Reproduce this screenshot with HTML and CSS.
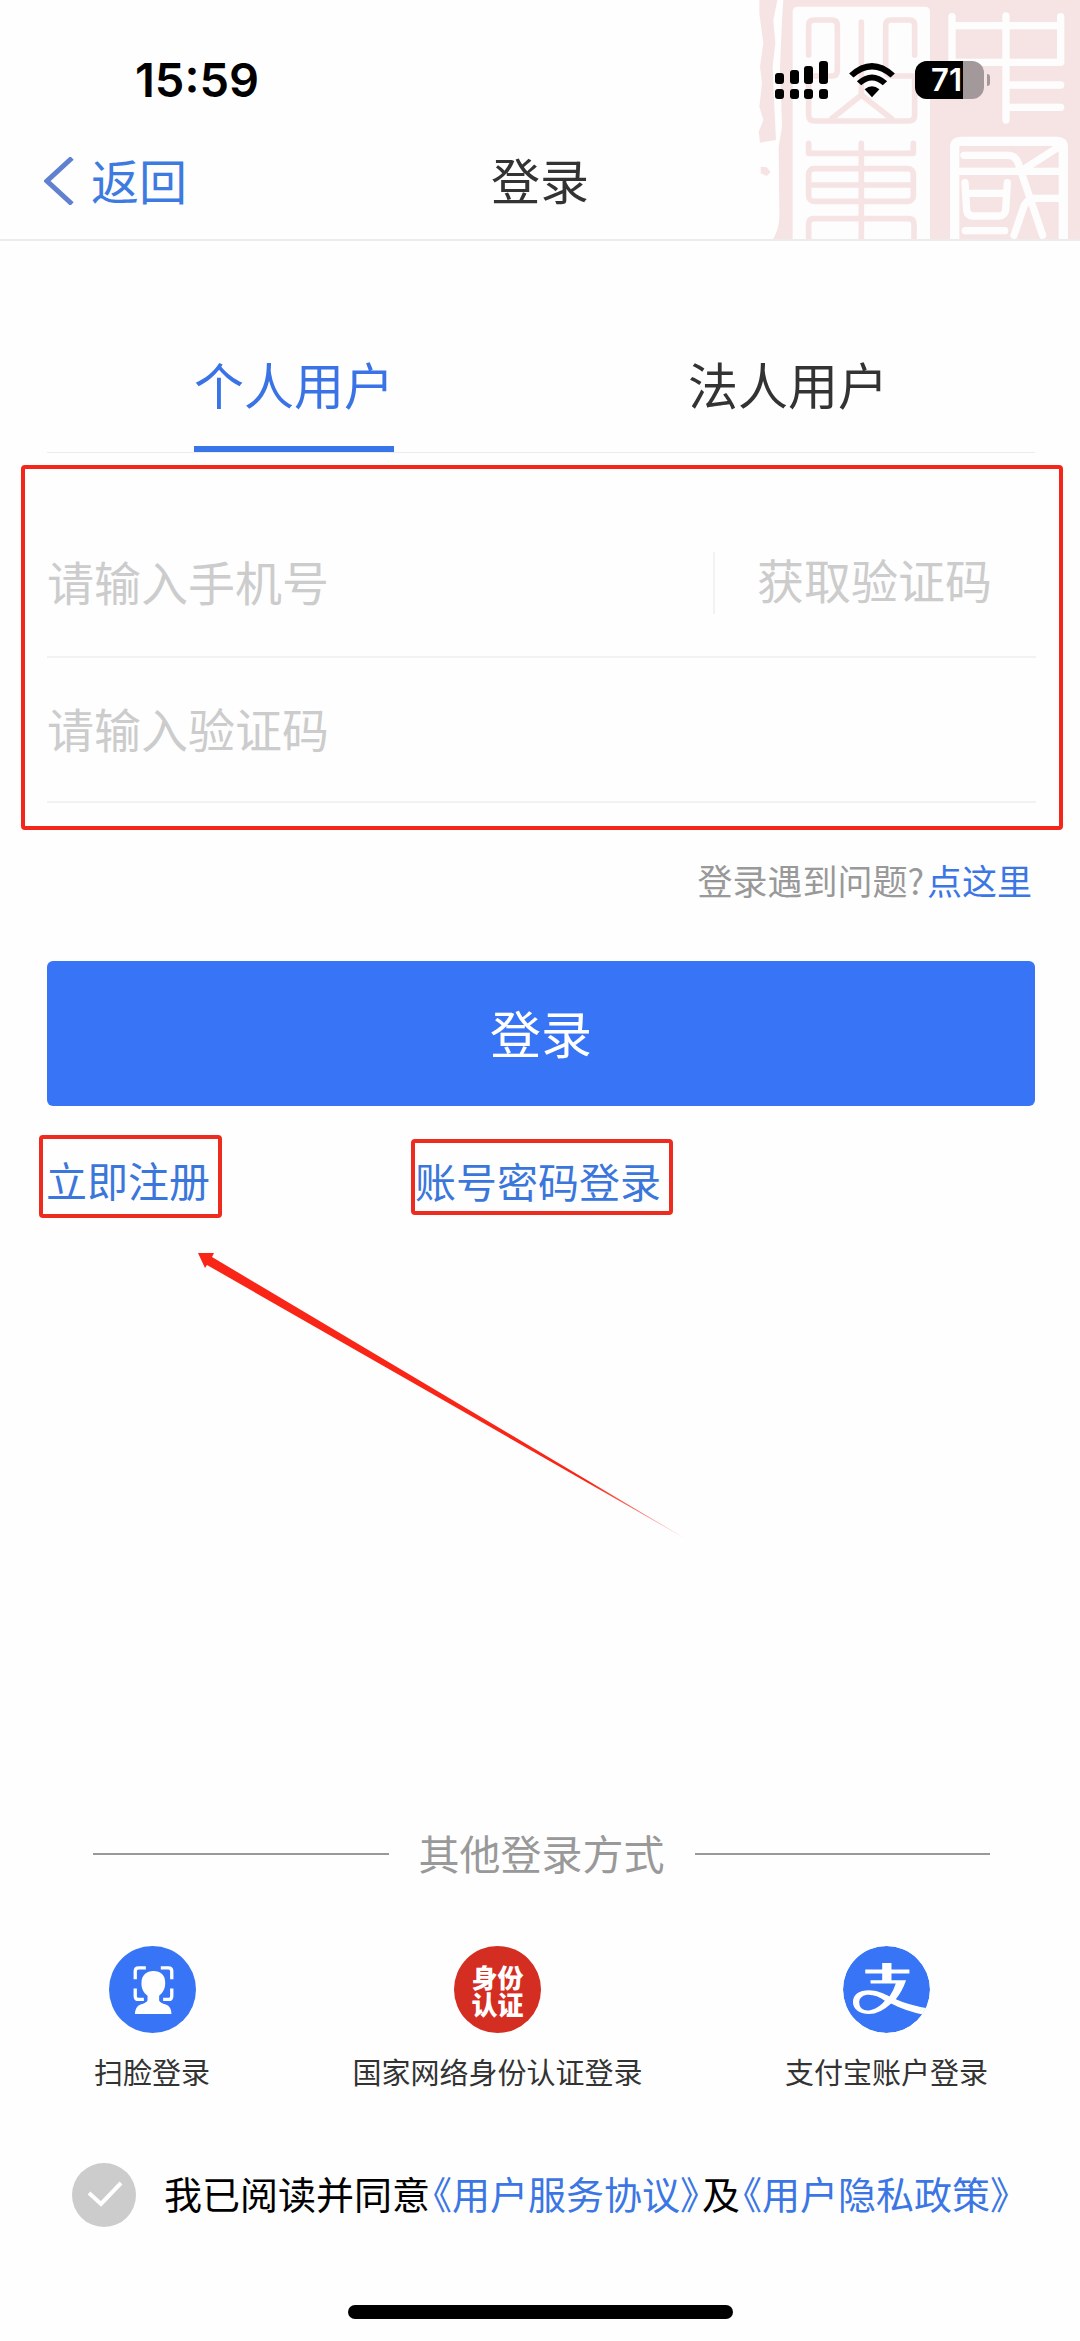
FILE: index.html
```html
<!DOCTYPE html>
<html lang="zh-CN">
<head>
<meta charset="utf-8">
<meta name="viewport" content="width=device-width, initial-scale=1">
<title>登录</title>
<link rel="stylesheet" href="styles.css">
</head>
<body>
<div class="screen">
  <header class="header">
    <svg class="seal" viewBox="0 0 1080 717" aria-hidden="true">
      <path fill="#f6e4e5" d="M190 0H1080V717H160Q180 680 178 640L176 440L186 380L180 200L186 60Z"/>
      <path fill="#f6e4e5" d="M118 0H172L160 60L166 130L158 200L162 300L168 420L120 428L116 395L130 360L118 320L126 250L120 200L130 130L118 40ZM122 500L140 502L152 516L140 528L122 520Z"/>
      <path fill="#fefdfd" d="M218 36Q218 20 234 20H616Q630 20 630 36V717H218Z"/>
      <g fill="none" stroke="#f6e4e5" stroke-width="17" stroke-linecap="round" stroke-linejoin="round">
        <path d="M266 165V76Q266 60 282 60H336Q352 60 352 76V210Q352 228 336 228H266V345Q266 363 284 363H566Q584 363 584 345V228H515Q497 228 497 210V76Q497 60 513 60H568Q584 60 584 76V165"/>
        <path d="M424 66V285M424 285L335 356M424 285L515 356"/>
        <path d="M266 430V460H580V430M424 430V717M266 555H580"/>
        <rect x="266" y="506" width="314" height="98" rx="16"/>
        <path d="M266 717V672Q266 656 282 656H566Q582 656 582 672V717"/>
      </g>
      <g fill="none" stroke="#fefdfd" stroke-width="22" stroke-linecap="round" stroke-linejoin="round">
        <path d="M696 50V187H1022V50M696 77H1022M858 48V360M858 255H1022M858 322H1022"/>
        <path stroke-width="28" d="M704 717V440Q704 424 722 424H1012Q1030 424 1030 440V717"/>
        <path d="M732 466H865Q890 466 898 500L968 706M716 514H1020M1008 446L905 512M1018 595H940Q915 600 908 630L882 706M735 548L740 630Q742 648 760 648H836Q854 648 857 630L862 548M745 580H855M736 692H854"/>
      </g>
    </svg>
    <div class="status">
      <span class="time">15:59</span>
      <svg class="signal" viewBox="0 0 54 38" aria-hidden="true">
        <rect x="0" y="12" width="9" height="11" rx="3"/><rect x="15" y="9" width="9" height="14" rx="3"/><rect x="29" y="5" width="9" height="18" rx="3"/><rect x="44" y="0" width="9" height="23" rx="3"/>
        <rect x="0" y="28" width="9" height="10" rx="3"/><rect x="15" y="28" width="9" height="10" rx="3"/><rect x="29" y="28" width="9" height="10" rx="3"/><rect x="44" y="28" width="9" height="10" rx="3"/>
      </svg>
      <svg class="wifi" viewBox="0 0 136 104" aria-hidden="true">
        <path d="M0 31Q68 -31 136 31L123 43Q68 -5 13 43Z"/>
        <path d="M23 54Q68 14 113 54L100 66Q68 38 36 66Z"/>
        <path d="M46 78Q68 60 90 78L68 102Z"/>
      </svg>
      <span class="battery"><span class="battery-level">71</span></span>
      <span class="battery-tip"></span>
    </div>
    <nav class="nav">
      <a class="back" href="#">
        <svg class="chevron" viewBox="0 0 30 48" aria-hidden="true"><path d="M28 1L3 24L28 47"/></svg>返回</a>
      <h1 class="title">登录</h1>
    </nav>
  </header>

  <main class="main">
    <div class="tabs" role="tablist">
      <button class="tab tab-active" type="button" role="tab" aria-selected="true">个人用户</button>
      <button class="tab" type="button" role="tab" aria-selected="false">法人用户</button>
    </div>

    <form class="login">
      <div class="fields">
        <div class="field field-phone">
          <input class="input" type="tel" aria-label="手机号" placeholder="请输入手机号">
          <button class="send" type="button">获取验证码</button>
        </div>
        <div class="field">
          <input class="input" type="text" aria-label="验证码" placeholder="请输入验证码">
        </div>
      </div>
      <p class="help">登录遇到问题?<a class="link help-link" href="#">点这里</a></p>
      <button class="submit" type="button">登录</button>
      <div class="options">
        <a class="option option-register" href="#">立即注册</a>
        <a class="option option-password" href="#">账号密码登录</a>
        <svg class="arrow" viewBox="0 0 488 286" aria-hidden="true">
          <defs><linearGradient id="fade" x1="0" x2="1"><stop offset=".8" stop-color="#f92618"/><stop offset="1" stop-color="#f92618" stop-opacity=".3"/></linearGradient></defs>
          <path fill="url(#fade)" d="M0 0L16 0L14 4L488 286L9 12L7 15Z"/>
        </svg>
      </div>
    </form>
  </main>

  <footer class="footer">
    <h2 class="others">其他登录方式</h2>
    <div class="methods">
      <a class="method" href="#">
        <svg class="badge" viewBox="89 47 262 262" aria-hidden="true">
          <circle cx="220" cy="178" r="131" fill="#3875f6"/>
          <path fill="none" stroke="#fff" stroke-width="10" d="M168 147V123Q168 113 178 113H200M245 113H268Q278 113 278 123V147M168 175V198Q168 208 178 208H194M278 175V198Q278 208 268 208H252"/>
          <path fill="#fff" stroke="#3875f6" stroke-width="8" paint-order="stroke" d="M223 122C244 122 259 136 258 155C260 174 251 188 240 197V211Q243 219 260 223Q277 229 277 252H167Q168 229 184 223Q201 219 205 211V197C193 188 185 174 187 155C187 136 202 122 223 122Z"/>
        </svg>
        扫脸登录</a>
      <a class="method" href="#">
        <span class="badge badge-id"><span>身份</span><span>认证</span></span>
        国家网络身份认证登录</a>
      <a class="method" href="#">
        <svg class="badge" viewBox="250 47 262 262" aria-hidden="true">
          <clipPath id="disc"><circle cx="381" cy="178" r="131"/></clipPath>
          <g clip-path="url(#disc)">
            <circle cx="381" cy="178" r="131" fill="#3875f6"/>
            <path fill="#fff" d="M317 118H368V98H396V118H450V130H396V150H440Q428 184 409 207Q445 224 512 236L502 256Q440 244 395 220Q361 252 328 252C298 252 280 236 280 216C280 193 299 180 328 180C350 180 372 189 390 199Q403 180 409 160H333V150H368V130H317ZM376 212C359 199 338 192 322 194C306 197 298 206 299 219C300 235 311 242 328 241C346 239 362 228 376 212Z"/>
          </g>
        </svg>
        支付宝账户登录</a>
    </div>
    <div class="agree">
      <span class="tick">
        <input class="tick-box" type="checkbox" id="agree">
        <svg class="tick-mark" viewBox="0 0 64 64" aria-hidden="true"><path d="M17 30L29 41L49 20"/></svg>
      </span>
      <p class="terms"><label for="agree">我已阅读并同意</label><a class="link term" href="#">《用户服务协议》</a>及<a class="link term" href="#">《用户隐私政策》</a></p>
    </div>
    <div class="home"></div>
  </footer>
</div>
</body>
</html>
```
FILE: styles.css
```css
* {
  box-sizing: border-box;
}

body {
  margin: 0;
  background: #fefefe;
  color: #333;
  font-family: "Noto Sans CJK SC", sans-serif;
}

h1,
h2,
p {
  margin: 0;
  font-weight: 400;
}

a {
  color: inherit;
  text-decoration: none;
}

button,
input {
  padding: 0;
  border: 0;
  background: none;
  color: inherit;
  font: inherit;
}

.screen {
  display: flex;
  flex-direction: column;
  min-height: 100vh;
}

/* Status bar and navigation */
.header {
  position: relative;
  border-bottom: 2px solid #ececec;
}

.seal {
  position: absolute;
  top: 0;
  right: 0;
  height: 100%;
}

.status {
  position: relative;
  display: flex;
  align-items: center;
  padding: 51px 90px 13px 135px;
}

.time {
  margin-right: auto;
  color: #000;
  font: 600 47px/58px Inter, sans-serif;
}

.signal {
  width: 54px;
  height: 38px;
}

.wifi {
  width: 46px;
  height: 35px;
  margin: 0 20px;
}

.battery {
  width: 69px;
  height: 38px;
  overflow: hidden;
  border-radius: 12px;
  background: #a3999b;
}

.battery-level {
  display: block;
  width: 48px;
  padding-right: 1px;
  background: #000;
  color: #fff;
  font: 600 31px/38px Inter, sans-serif;
  text-align: right;
}

.battery-tip {
  width: 3px;
  height: 12px;
  margin-left: 3px;
  border-radius: 0 4px 4px 0;
  background: #a3999b;
}

.nav {
  position: relative;
  display: grid;
  grid-template-columns: 1fr auto 1fr;
  align-items: center;
  height: 117px;
  padding: 0 44px 4px;
  font-size: 48px;
  line-height: 60px;
}

.back {
  display: flex;
  align-items: center;
  gap: 17px;
  color: #3d7be0;
}

.chevron {
  width: 30px;
  height: 48px;
  margin-top: 4px;
  fill: none;
  stroke: #6080d0;
  stroke-width: 5;
}

.title {
  font-size: 49px;
}

/* Login form */
.tabs {
  display: grid;
  grid-template-columns: 1fr 1fr;
  justify-items: center;
  margin: 112px 45px 12px 47px;
  border-bottom: 1px solid #ececec;
}

.tab {
  padding-bottom: 33px;
  border-bottom: 6px solid transparent;
  font-size: 50px;
  line-height: 60px;
}

.tab-active {
  border-color: #3875e8;
  color: #3a73e6;
}

.fields {
  margin: 0 17px 0 21px;
  padding: 40px 23px 23px 22px;
  border: 4px solid #f4261a;
  border-radius: 4px;
}

.field {
  display: flex;
  align-items: center;
  height: 145px;
  border-bottom: 2px solid #f2f2f2;
}

.field-phone {
  height: 149px;
}

.input {
  flex: 1;
  min-width: 0;
  height: 100%;
  padding-bottom: 4px;
  outline: 0;
  font-size: 47px;
}

.input::placeholder {
  color: #ccc;
  opacity: 1;
}

.send {
  padding: 0 44px 8px 42px;
  border-left: 2px solid #f2f2f2;
  color: #ccc;
  font-size: 47px;
  line-height: 54px;
}

.help {
  margin: 25px 48px 0;
  color: #999;
  font-size: 35px;
  line-height: 50px;
  text-align: right;
}

.link {
  color: #3b76e4;
}

.help-link {
  margin-left: 3px;
}

.submit {
  display: block;
  width: calc(100% - 92px);
  height: 145px;
  margin: 56px 45px 29px 47px;
  padding-bottom: 4px;
  border-radius: 6px;
  background: #3875f6;
  color: #fff;
  font-size: 51px;
}

.options {
  position: relative;
  display: grid;
  grid-template-columns: 1fr auto 1fr;
  align-items: center;
  justify-items: start;
  margin: 0 35px 0 39px;
}

.option {
  border: 4px solid #ee2b1f;
  border-radius: 4px;
  color: #3b76dc;
  font-size: 41px;
  line-height: 56px;
}

.option-register {
  padding: 12px 8px 7px 3px;
}

.option-password {
  padding: 9px 8px 3px 0;
}

.arrow {
  position: absolute;
  top: 118px;
  left: 159px;
  width: 488px;
  height: 286px;
}

/* Other ways to log in */
.footer {
  margin-top: auto;
  padding-bottom: 22px;
}

.others {
  display: flex;
  align-items: center;
  gap: 30px;
  padding: 0 90px 0 93px;
  color: #999;
  font-size: 41px;
  line-height: 60px;
}

.others::before,
.others::after {
  content: "";
  flex: 1;
  height: 2px;
  margin-top: 4px;
  background: #999;
}

.methods {
  display: flex;
  justify-content: space-between;
  padding: 64px 92px 70px 94px;
}

.method {
  display: flex;
  flex-direction: column;
  align-items: center;
  gap: 16px;
  font-size: 29px;
  line-height: 44px;
}

.badge {
  width: 87px;
  height: 87px;
}

.badge-id {
  display: flex;
  flex-direction: column;
  align-items: center;
  justify-content: center;
  border-radius: 50%;
  background: #d42d22;
  color: #fff;
  font-size: 26px;
  font-weight: 900;
  line-height: 27px;
}

.agree {
  display: flex;
  align-items: center;
  gap: 28px;
  padding: 0 60px 0 72px;
}

.tick {
  position: relative;
  width: 64px;
  height: 64px;
}

.tick-box {
  appearance: none;
  width: 64px;
  height: 64px;
  margin: 0;
  border-radius: 50%;
  background: #ccc;
}

.tick-mark {
  position: absolute;
  inset: 0;
  fill: none;
  stroke: #fff;
  stroke-width: 4;
  pointer-events: none;
}

.terms {
  padding-bottom: 4px;
  color: #000;
  font-size: 38px;
  line-height: 60px;
  white-space: nowrap;
}

.term {
  margin: 0 3px;
  font-feature-settings: "halt";
}

.home {
  width: 385px;
  height: 14px;
  margin: 78px auto 0;
  border-radius: 7px;
  background: #000;
}
```
